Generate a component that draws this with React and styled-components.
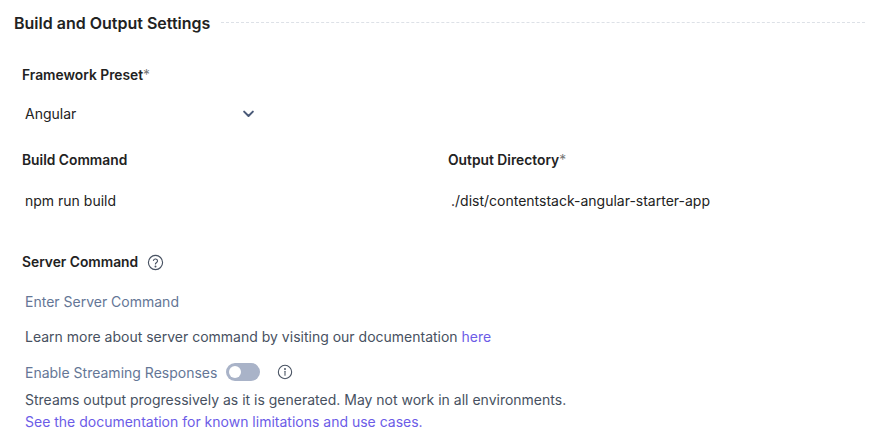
import React from "react";
import styled, { createGlobalStyle } from "styled-components";

const Global = createGlobalStyle`
  body { margin: 0; background: #fff; font-family: Inter, "Noto Sans", sans-serif; }
`;

const Page = styled.div`
  width: 877px; height: 445px; padding: 0 12px 0 14px; box-sizing: border-box; overflow: hidden;
`;
const Header = styled.div`
  display: flex; align-items: center; gap: 11px; height: 46px;
`;
const Title = styled.h2`
  margin: 0; font-size: 16px; font-weight: 600; color: #222; white-space: nowrap;
`;
const Dash = styled.div`
  flex: 1; border-top: 1px dashed #dde1e7; margin-top: -2px;
`;
const Body = styled.div`
  padding-left: 8px;
`;
const Label = styled.div`
  font-size: 13.8px; font-weight: 600; color: #222; height: 18px; display: flex; align-items: center; gap: 9px;
  span.req { color: #777; font-weight: 400; }
`;
const Value = styled.div`
  font-size: 14px; padding-left: 3px; height: 20px; display: flex; align-items: center;
  color: ${p => (p.$placeholder ? "#647696" : "#222")};
`;
const Field = styled.div`
  display: flex; flex-direction: column; gap: ${p => p.$gap || 21}px;
`;
const Select = styled.div`
  width: 234px; display: flex; justify-content: space-between; align-items: center;
`;
const Row = styled.div`
  display: grid; grid-template-columns: 426px 1fr; margin-top: ${p => p.$mt}px;
`;
const Text = styled.div`
  font-size: 14px; color: #475161; padding-left: 3px; margin-top: ${p => p.$mt || 0}px; line-height: 20px;
  a { color: #6c5ce7; text-decoration: none; }
`;
const Toggle = styled.div`
  width: 34px; height: 18px; border-radius: 9px; background: #a9b3c8; position: relative; margin-left: 9px;
  &::after { content: ""; position: absolute; left: 3px; top: 3px; width: 12px; height: 12px; border-radius: 50%; background: #fff; }
`;
const StreamRow = styled.div`
  display: flex; align-items: center; padding-left: 3px; margin-top: 15px; font-size: 14px; color: #647696; height: 20px;
`;
const Icon = styled.svg`
  margin-left: ${p => p.$ml || 0}px; flex: none;
`;

const Chevron = () => (
  <svg width="15" height="15" viewBox="0 0 24 24" fill="none" stroke="#4a5a78" strokeWidth="3.2" strokeLinecap="round" strokeLinejoin="round"><path d="M5 9l7 7 7-7" /></svg>
);

export default function App() {
  return (
    <Page>
      <Global />
      <Header><Title>Build and Output Settings</Title><Dash /></Header>
      <Body>
        <Field $gap={19} style={{ marginTop: 20 }}>
          <Label>Framework Preset<span className="req" style={{ marginLeft: -9 }}>*</span></Label>
          <Select><Value>Angular</Value><Chevron /></Select>
        </Field>
        <Row $mt={28}>
          <Field $gap={21}><Label>Build Command</Label><Value>npm run build</Value></Field>
          <Field $gap={21}><Label>Output Directory<span className="req" style={{ marginLeft: -9 }}>*</span></Label><Value>./dist/contentstack-angular-starter-app</Value></Field>
        </Row>
        <Field $gap={20} style={{ marginTop: 43 }}>
          <Label>Server Command
            <Icon width="17" height="17" viewBox="0 0 24 24" fill="none" stroke="#475161" strokeWidth="1.6" strokeLinecap="round">
              <circle cx="12" cy="12" r="10" /><path d="M9.1 9a3 3 0 0 1 5.8 1c0 2-3 2.5-3 4" /><circle cx="12" cy="17.5" r="0.6" fill="#475161" />
            </Icon>
          </Label>
          <Value $placeholder>Enter Server Command</Value>
        </Field>
        <Text $mt={16}>Learn more about server command by visiting our documentation <a href="#">here</a></Text>
        <StreamRow>
          Enable Streaming Responses
          <Toggle />
          <Icon $ml={17} width="16" height="16" viewBox="0 0 24 24" fill="none" stroke="#475161" strokeWidth="1.6" strokeLinecap="round">
            <circle cx="12" cy="12" r="10" /><path d="M12 11v6" /><circle cx="12" cy="7.5" r="0.6" fill="#475161" />
          </Icon>
        </StreamRow>
        <Text $mt={8}>Streams output progressively as it is generated. May not work in all environments.</Text>
        <Text $mt={2}><a href="#">See the documentation for known limitations and use cases.</a></Text>
      </Body>
    </Page>
  );
}
